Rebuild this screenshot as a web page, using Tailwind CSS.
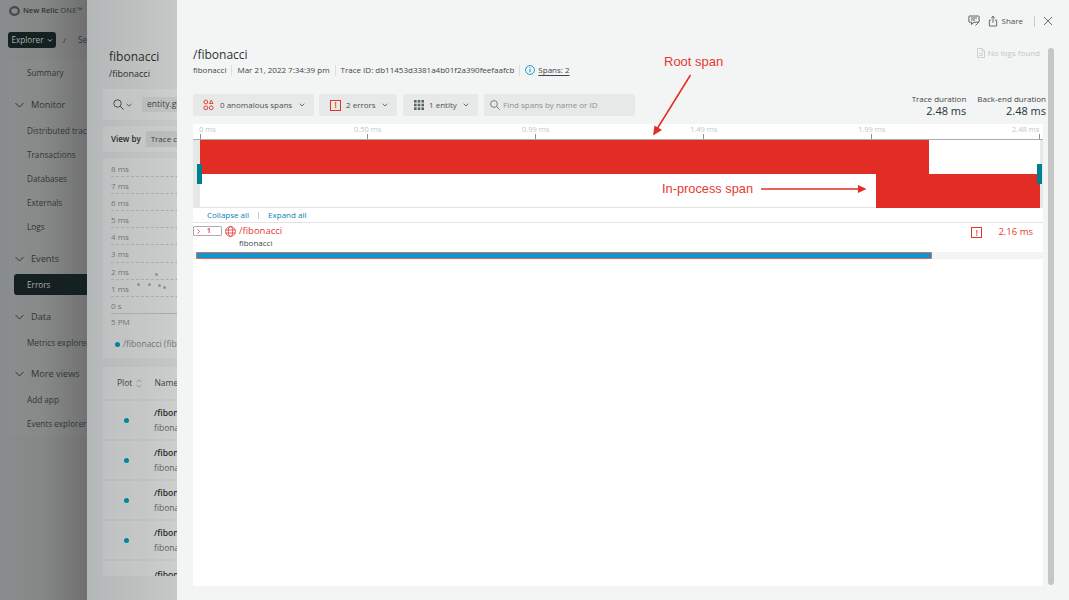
<!DOCTYPE html>
<html lang="en">
<head>
  <meta charset="UTF-8">
  <title>Distributed tracing - fibonacci</title>
  <script src="https://cdn.jsdelivr.net/npm/@tailwindcss/browser@4"></script>
</head>
<body class="h-[600px] w-[1069px] overflow-hidden font-['Open_Sans',sans-serif]">
  <div class="relative flex h-[600px] w-[1069px]">

    <!-- Left nav, dimmed -->
    <nav class="h-full w-[87px] shrink-0 overflow-hidden bg-gradient-to-r from-[#8a8d8d] via-[#858787] to-[#6f6f70] text-[#303535]">
      <div class="flex h-[20px] items-center gap-[3px] pl-[9px] pt-[1px]">
        <svg class="h-[10px] w-[11px]" viewBox="0 0 11 10"><ellipse cx="5.500" cy="5" rx="4.300" ry="3.800" fill="none" stroke="#454a4a" stroke-width="2.200"/></svg>
        <span class="whitespace-nowrap text-[7.500px] font-semibold leading-none">New Relic <span class="font-normal tracking-[0.3px]">ONE™</span></span>
      </div>
      <div class="mt-[12px] flex items-center pl-[8px]">
        <div class="flex h-[16px] w-[50px] items-center justify-center gap-[3px] rounded-[3px] bg-[#152020] text-[8.200px] text-[#a9adad]">Explorer
          <svg class="h-[5px] w-[6px]" viewBox="0 0 6 5"><path d="M1 1.300 3 3.300 5 1.300" fill="none" stroke="#a9adad"/></svg>
        </div>
        <span class="ml-[7px] text-[8px]">/</span>
        <span class="ml-[12px] text-[8.200px]">Se</span>
      </div>
      <div class="mt-[13px] ml-[9px] flex flex-col bg-white/[0.02] text-[8.200px] leading-[24px]">
        <span class="pl-[18px]">Summary</span>
        <div class="mt-[8px] flex items-center gap-[7px] pl-[6px] text-[9.200px]">
          <svg class="h-[6px] w-[9px] shrink-0" viewBox="0 0 9 6"><path d="M.5 1 4.500 5 8.500 1" fill="none" stroke="#303535"/></svg>Monitor
        </div>
        <span class="mt-[2px] whitespace-nowrap pl-[18px]">Distributed tracing</span>
        <span class="pl-[18px]">Transactions</span>
        <span class="pl-[18px]">Databases</span>
        <span class="pl-[18px]">Externals</span>
        <span class="pl-[18px]">Logs</span>
        <div class="mt-[8px] flex items-center gap-[7px] pl-[6px] text-[9.200px]">
          <svg class="h-[6px] w-[9px] shrink-0" viewBox="0 0 9 6"><path d="M.5 1 4.500 5 8.500 1" fill="none" stroke="#303535"/></svg>Events
        </div>
        <span class="mb-[2px] ml-[5px] mt-[3px] rounded-l-[3px] bg-[#152020] pl-[13px] leading-[21px] text-[#a9adad]">Errors</span>
        <div class="mt-[8px] flex items-center gap-[7px] pl-[6px] text-[9.200px]">
          <svg class="h-[6px] w-[9px] shrink-0" viewBox="0 0 9 6"><path d="M.5 1 4.500 5 8.500 1" fill="none" stroke="#303535"/></svg>Data
        </div>
        <span class="mt-[2px] whitespace-nowrap pl-[18px]">Metrics explorer</span>
        <div class="mt-[7px] flex items-center gap-[7px] pl-[6px] text-[9.200px]">
          <svg class="h-[6px] w-[9px] shrink-0" viewBox="0 0 9 6"><path d="M.5 1 4.500 5 8.500 1" fill="none" stroke="#303535"/></svg>More views
        </div>
        <span class="mt-[2px] pl-[18px]">Add app</span>
        <span class="whitespace-nowrap pl-[18px]">Events explorer</span>
      </div>
    </nav>

    <!-- Entity panel, dimmed -->
    <section class="h-full w-[90px] shrink-0 overflow-hidden bg-gradient-to-r from-[#b4b7b7] to-[#c6c8c8] pl-[16px] text-[#3c4242]">
      <div class="whitespace-nowrap pl-[6px] pt-[47px] text-[12px] leading-[20px] text-[#262b2b]">fibonacci</div>
      <div class="pl-[6px] text-[9px] leading-[14px] text-[#262b2b]">/fibonacci</div>

      <div class="mt-[8px] flex h-[31px] w-[200px] items-center gap-[2px] bg-white/10 pl-[10px]">
        <svg class="h-[11px] w-[11px]" viewBox="0 0 11 11"><circle cx="4.500" cy="4.500" r="3.700" fill="none" stroke="#3c4242" stroke-width=".9"/><path d="M7.300 7.300 10.500 10.500" stroke="#3c4242"/></svg>
        <svg class="h-[4px] w-[6px]" viewBox="0 0 6 4"><path d="M.5.700 3 3.200 5.500.7" fill="none" stroke="#3c4242" stroke-width=".8"/></svg>
        <span class="ml-[8px] flex h-[15px] items-center bg-black/[0.05] pl-[5px] text-[8.500px]">entity.guid</span>
      </div>

      <div class="mt-[6px] flex h-[26px] w-[200px] items-center gap-[5px] bg-white/10 pl-[8px] text-[8px]">
        <span class="font-semibold text-[#262b2b]">View by</span>
        <span class="flex h-[16px] items-center bg-black/[0.07] pl-[5px] whitespace-nowrap">Trace count</span>
      </div>

      <!-- Scatter chart -->
      <div class="relative mt-[6px] h-[200px] w-[200px] bg-white/10 pl-[8px] pt-[2px] text-[8px] text-[#6f7474]">
        <div class="h-[17.100px] border-b border-dashed border-[#a9acac] leading-[17px]">8 ms</div>
        <div class="h-[17.100px] border-b border-dashed border-[#a9acac] leading-[17px]">7 ms</div>
        <div class="h-[17.100px] border-b border-dashed border-[#a9acac] leading-[17px]">6 ms</div>
        <div class="h-[17.100px] border-b border-dashed border-[#a9acac] leading-[17px]">5 ms</div>
        <div class="h-[17.100px] border-b border-dashed border-[#a9acac] leading-[17px]">4 ms</div>
        <div class="h-[17.100px] border-b border-dashed border-[#a9acac] leading-[17px]">3 ms</div>
        <div class="h-[17.100px] border-b border-dashed border-[#a9acac] leading-[17px]">2 ms</div>
        <div class="h-[17.100px] border-b border-dashed border-[#a9acac] leading-[17px]">1 ms</div>
        <div class="h-[17.100px] border-b border-[#a9acac] leading-[17px]">0 s</div>
        <div class="h-[16px] leading-[16px]">5 PM</div>
        <div class="mt-[8px] flex items-center gap-[3px] whitespace-nowrap pl-[4px] text-[8.500px]"><span class="h-[5px] w-[5px] rounded-full bg-[#00839c]"></span>/fibonacci (fibonacci)</div>
        <span class="absolute left-[52px] top-[115px] h-[3px] w-[3px] rounded-full bg-[#8f9393]"></span>
        <span class="absolute left-[34px] top-[125px] h-[3px] w-[3px] rounded-full bg-[#8f9393]"></span>
        <span class="absolute left-[45px] top-[125px] h-[3px] w-[3px] rounded-full bg-[#8f9393]"></span>
        <span class="absolute left-[55px] top-[126px] h-[3px] w-[3px] rounded-full bg-[#8f9393]"></span>
        <span class="absolute left-[60px] top-[128px] h-[3px] w-[3px] rounded-full bg-[#8f9393]"></span>
      </div>

      <!-- Table -->
      <div class="mt-[9px] flex h-[32px] w-[200px] items-center bg-white/10 pl-[14px] text-[8.500px]">
        <span>Plot</span>
        <svg class="ml-[4px] h-[9px] w-[6px]" viewBox="0 0 6 9"><path d="M.7 3 3 .8 5.300 3M.7 6 3 8.200 5.300 6" fill="none" stroke="#7c8181" stroke-width=".7"/></svg>
        <span class="ml-[12px]">Name</span>
      </div>
      <div class="mt-[2px] flex h-[38px] w-[200px] items-center bg-white/10 pl-[21px]">
        <span class="h-[5px] w-[5px] rounded-full bg-[#00839c]"></span>
        <div class="ml-[25px] text-[8.500px] leading-[15px]"><div class="font-semibold text-[#262b2b]">/fibonacci</div><div class="text-[#5c6161]">fibonacci</div></div>
      </div>
      <div class="mt-[2px] flex h-[38px] w-[200px] items-center bg-white/10 pl-[21px]">
        <span class="h-[5px] w-[5px] rounded-full bg-[#00839c]"></span>
        <div class="ml-[25px] text-[8.500px] leading-[15px]"><div class="font-semibold text-[#262b2b]">/fibonacci</div><div class="text-[#5c6161]">fibonacci</div></div>
      </div>
      <div class="mt-[2px] flex h-[38px] w-[200px] items-center bg-white/10 pl-[21px]">
        <span class="h-[5px] w-[5px] rounded-full bg-[#00839c]"></span>
        <div class="ml-[25px] text-[8.500px] leading-[15px]"><div class="font-semibold text-[#262b2b]">/fibonacci</div><div class="text-[#5c6161]">fibonacci</div></div>
      </div>
      <div class="mt-[2px] flex h-[38px] w-[200px] items-center bg-white/10 pl-[21px]">
        <span class="h-[5px] w-[5px] rounded-full bg-[#00839c]"></span>
        <div class="ml-[25px] text-[8.500px] leading-[15px]"><div class="font-semibold text-[#262b2b]">/fibonacci</div><div class="text-[#5c6161]">fibonacci</div></div>
      </div>
      <div class="mt-[2px] h-[15px] w-[200px] overflow-hidden bg-white/10 pl-[51px] pt-[6px] text-[8.500px] font-semibold leading-[15px] text-[#262b2b]">/fibonacci</div>
    </section>

    <!-- Trace details drawer -->
    <main class="flex h-full flex-1 bg-[#f3f4f4] pl-[16px] text-[#293338]">
      <div class="flex h-full w-[850px] shrink-0 flex-col">
        <div class="flex h-[30px] items-center justify-end pr-[8px] pt-[12px]">
          <svg class="h-[12px] w-[12px]" viewBox="0 0 12 12" fill="none" stroke="#4a5255" stroke-width=".9"><path d="M1.500 1h9a.6.6 0 0 1 .6.6v5a.6.6 0 0 1-.6.6H6L3.500 9.500V7.200h-2a.6.6 0 0 1-.6-.6v-5a.6.6 0 0 1 .6-.6z"/><path d="M3 3h6M3 5h4"/><path d="M7.500 10.500 9.300 8.700 11 7"/></svg>
          <svg class="ml-[8px] h-[12px] w-[10px]" viewBox="0 0 11 12" fill="none" stroke="#4a5255" stroke-width=".9"><path d="M3.500 5H1.500v6.500h8V5h-2M5.500 8V.8M3.400 2.800 5.500.8l2.100 2"/></svg>
          <span class="ml-[4px] text-[8px] text-[#4a5255]">Share</span>
          <span class="ml-[11px] h-[11px] w-px bg-[#c9cccc]"></span>
        </div>

        <div class="-mr-[3px] mt-[14px] flex items-start">
          <div class="flex-1">
            <h1 class="mt-[2px] text-[12px] leading-[18px] text-[#293338]">/fibonacci</h1>
            <div class="flex h-[12px] items-center text-[8px] text-[#3e4649]">
              <span>fibonacci</span>
              <span class="mx-[5px] h-[11px] w-px bg-[#dcdfdf]"></span>
              <span>Mar 21, 2022 7:34:39 pm</span>
              <span class="mx-[5px] h-[11px] w-[1px] bg-[#dcdfdf]"></span>
              <span>Trace ID: db11453d3381a4b01f2a390feefaafcb</span>
              <span class="mx-[5px] h-[11px] w-px bg-[#dcdfdf]"></span>
              <svg class="mr-[3px] h-[10px] w-[10px]" viewBox="0 0 10 10" fill="none"><circle cx="5" cy="5" r="4.400" stroke="#0b8fc9" stroke-width=".9"/><path d="M5 4v3.200" stroke="#0b8fc9"/><path d="M5 2.300v1" stroke="#0b8fc9"/></svg>
              <span class="underline underline-offset-2">Spans: 2</span>
            </div>
          </div>
          <div class="flex items-center gap-[3px] pr-[6px] pt-[3px] text-[8px] text-[#c3c7c7]">
            <svg class="h-[10px] w-[8px]" viewBox="0 0 8 10" fill="none" stroke="#c3c7c7" stroke-width=".8"><path d="M.5.500h4.500L7.500 3v6.500h-7zM5 .5V3h2.500M2 5.500h4M2 7.500h4"/></svg>
            No logs found
          </div>
        </div>

        <div class="-mr-[3px] mt-[17px] flex items-end">
          <div class="flex gap-[5px] pb-[8px] text-[8px] text-[#4a5255]">
            <div class="flex h-[22px] w-[121px] items-center gap-[3px] rounded-[2px] bg-[#e7e8e8] pl-[10px]">
              <svg class="h-[12px] w-[11px]" viewBox="0 0 11 12" fill="none" stroke="#e0352b" stroke-width=".9"><circle cx="2.800" cy="8.800" r="1.900"/><circle cx="8.200" cy="8.800" r="1.900"/><circle cx="2.800" cy="3" r="1.900"/><path d="M8.200 1.200 10 4.500H6.400z"/></svg>
              <span class="ml-[3px]">0 anomalous spans</span>
              <svg class="ml-[4px] h-[4px] w-[6px]" viewBox="0 0 6 4"><path d="M.7.700 3 3 5.300.7" fill="none" stroke="#4a5255" stroke-width=".8"/></svg>
            </div>
            <div class="flex h-[22px] w-[78px] items-center gap-[3px] rounded-[2px] bg-[#e7e8e8] pl-[11px]">
              <span class="flex h-[11px] w-[11px] items-center justify-center border border-[#e0352b] text-[8px] font-semibold leading-none text-[#e0352b]">!</span>
              <span class="ml-[2px]">2 errors</span>
              <svg class="ml-[3px] h-[4px] w-[6px]" viewBox="0 0 6 4"><path d="M.7.700 3 3 5.300.7" fill="none" stroke="#4a5255" stroke-width=".8"/></svg>
            </div>
            <div class="ml-[1px] flex h-[22px] w-[75px] items-center gap-[3px] rounded-[2px] bg-[#e7e8e8] pl-[11px]">
              <svg class="h-[10px] w-[10px]" viewBox="0 0 10 10" fill="#5c6467"><rect width="2.600" height="2.600"/><rect x="3.700" width="2.600" height="2.600"/><rect x="7.400" width="2.600" height="2.600"/><rect y="3.700" width="2.600" height="2.600"/><rect x="3.700" y="3.700" width="2.600" height="2.600"/><rect x="7.400" y="3.700" width="2.600" height="2.600"/><rect y="7.400" width="2.600" height="2.600"/><rect x="3.700" y="7.400" width="2.600" height="2.600"/><rect x="7.400" y="7.400" width="2.600" height="2.600"/></svg>
              <span class="ml-[2px]">1 entity</span>
              <svg class="ml-[3px] h-[4px] w-[6px]" viewBox="0 0 6 4"><path d="M.7.700 3 3 5.300.7" fill="none" stroke="#4a5255" stroke-width=".8"/></svg>
            </div>
            <div class="ml-[1px] flex h-[22px] w-[151px] items-center gap-[3px] rounded-[2px] bg-[#e7e8e8] pl-[6px] text-[#8b9193]">
              <svg class="h-[10px] w-[10px]" viewBox="0 0 10 10" fill="none" stroke="#5c6467" stroke-width=".8"><circle cx="4" cy="4" r="3.400"/><path d="M6.500 6.500 9.700 9.700"/></svg>
              Find spans by name or ID
            </div>
          </div>
          <div class="ml-auto flex gap-[11px] pb-[6px] text-right text-[8px] leading-[11px] text-[#3e4649]">
            <div><div class="whitespace-nowrap">Trace duration</div><div class="text-[11px] leading-[14px] text-[#293338]">2.48 ms</div></div>
            <div><div class="whitespace-nowrap">Back-end duration</div><div class="text-[11px] leading-[14px] text-[#293338]">2.48 ms</div></div>
          </div>
        </div>

        <!-- White card with the trace -->
        <div class="h-[462px] bg-white">
          <div class="relative h-[16px] border-b border-[#a9adad]">
            <span class="absolute left-[6px] top-0 text-[7.500px] leading-[10px] text-[#c3c7c7]">0 ms</span>
            <span class="absolute left-[161px] top-0 text-[7.500px] leading-[10px] text-[#c3c7c7]">0.50 ms</span>
            <span class="absolute left-[329px] top-0 text-[7.500px] leading-[10px] text-[#c3c7c7]">0.99 ms</span>
            <span class="absolute left-[497px] top-0 text-[7.500px] leading-[10px] text-[#c3c7c7]">1.49 ms</span>
            <span class="absolute left-[665px] top-0 text-[7.500px] leading-[10px] text-[#c3c7c7]">1.99 ms</span>
            <span class="absolute left-[819px] top-0 text-[7.500px] leading-[10px] text-[#c3c7c7]">2.48 ms</span>
            <span class="absolute left-[7px] top-[10px] h-[5px] w-px bg-[#8b9193]"></span>
            <span class="absolute left-[174px] top-[10px] h-[5px] w-px bg-[#8b9193]"></span>
            <span class="absolute left-[342px] top-[10px] h-[5px] w-px bg-[#8b9193]"></span>
            <span class="absolute left-[510px] top-[10px] h-[5px] w-px bg-[#8b9193]"></span>
            <span class="absolute left-[678px] top-[10px] h-[5px] w-px bg-[#8b9193]"></span>
            <span class="absolute left-[846px] top-[10px] h-[5px] w-px bg-[#8b9193]"></span>
          </div>

          <div class="relative flex h-[68px] border-b border-[#e3e5e5]">
            <div class="w-[7px] bg-[#e6e8e8]"></div>
            <div class="w-[840px]">
              <div class="flex h-[34px]"><div class="w-[729px] bg-[#e12d23]"></div></div>
              <div class="flex h-[34px] justify-end"><div class="w-[164px] bg-[#e12d23]"></div></div>
            </div>
            <div class="w-[3px] bg-[#e6e8e8]"></div>
            <span class="absolute left-[4px] top-[24px] h-[20px] w-[5px] bg-[#00808f]"></span>
            <span class="absolute left-[844px] top-[24px] h-[20px] w-[5px] bg-[#00808f]"></span>
          </div>

          <div class="flex h-[15px] items-center border-b border-[#e3e5e5] pl-[14px] text-[8px] text-[#0b7fb5]">
            <span>Collapse all</span>
            <span class="mx-[9px] h-[7px] w-px bg-[#c9cccc]"></span>
            <span>Expand all</span>
          </div>

          <div class="flex pt-[1px]">
            <div class="mt-[2px] flex h-[10px] w-[29px] items-center justify-between rounded-[1px] border border-[#a9adad] px-[3px] text-[7.500px] font-semibold text-[#e12d23]">
              <svg class="h-[5px] w-[3px]" viewBox="0 0 3 5"><path d="M.5.500 2.500 2.500.5 4.500" fill="none" stroke="#e12d23" stroke-width=".8"/></svg>
              <span class="pr-[7px]">1</span>
            </div>
            <svg class="ml-[3px] mt-[2px] h-[11px] w-[11px]" viewBox="0 0 11 11" fill="none" stroke="#e0352b" stroke-width=".8"><circle cx="5.500" cy="5.500" r="4.900"/><ellipse cx="5.500" cy="5.500" rx="2.200" ry="4.900"/><path d="M.6 4h9.800M.6 7h9.800"/></svg>
            <div class="ml-[3px] text-[8px]">
              <div class="text-[9.500px] leading-[14px] text-[#e53a30]">/fibonacci</div>
              <div class="leading-[10px] text-[#3e4649]">fibonacci</div>
            </div>
            <span class="ml-auto mr-[-1px] mt-[3px] flex h-[11px] w-[11px] items-center justify-center border border-[#e0352b] text-[8px] font-semibold leading-none text-[#e0352b]">!</span>
            <span class="ml-[17px] mr-[10px] text-[9.500px] leading-[16px] text-[#e53a30]">2.16 ms</span>
          </div>

          <div class="mt-[4px] h-[7px] bg-[#f3f4f4] pl-[3px]">
            <div class="h-[7px] w-[736px] rounded-[1px] border border-[#e0675f] bg-[#0e97cc]"></div>
          </div>
        </div>
      </div>

      <div class="ml-[5px] mt-[48px] h-[537px] w-[6px] rounded-[3px] bg-[#c4c6c6]"></div>
      <svg class="ml-[-11px] mt-[16px] h-[10px] w-[10px] shrink-0" viewBox="0 0 11 11"><path d="M1 1 10 10M10 1 1 10" stroke="#4a5255" stroke-width=".9"/></svg>
    </main>

    <!-- Red annotations laid over the screenshot -->
    <span class="absolute left-[664px] top-[54px] font-['Liberation_Sans',sans-serif] text-[13px] leading-[16px] text-[#e53a30]">Root span</span>
    <span class="absolute left-[662px] top-[181px] font-['Liberation_Sans',sans-serif] text-[12.800px] leading-[16px] text-[#e53a30]">In-process span</span>
    <svg class="absolute left-0 top-0 h-[600px] w-[1069px]" viewBox="0 0 1069 600" fill="none">
      <path d="M690.500 75 657 129" stroke="#e12d23" stroke-width="1.500"/>
      <path d="M653 135.500 654.500 125.500 662 130z" fill="#e12d23"/>
      <path d="M761 189H859" stroke="#e12d23" stroke-width="1.500"/>
      <path d="M866.500 189 858 185V193z" fill="#e12d23"/>
    </svg>
  </div>
</body>
</html>
